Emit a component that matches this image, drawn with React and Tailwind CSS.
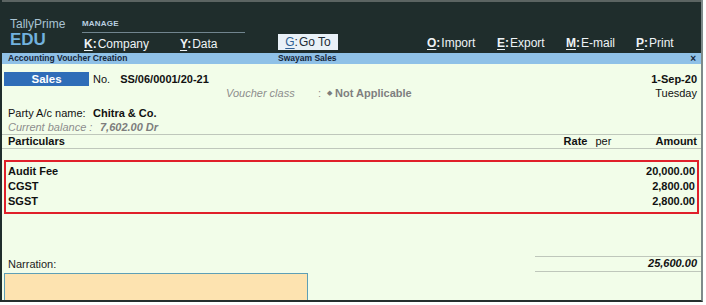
import React from "react";

const font = { fontFamily: "'Liberation Sans', Arial, sans-serif" };

function Key({ k, label, w }) {
  return (
    <div className={`${w} text-[12px] leading-[14px] text-[#eef3f6] whitespace-nowrap`}>
      <span className="font-bold underline underline-offset-2 decoration-1">{k}</span>
      <span className="font-bold">:</span>
      <span className="ml-[1px]">{label}</span>
    </div>
  );
}

export default function App() {
  return (
    <div className="w-[706px] h-[305px] bg-white" style={font}>
      <div className="w-[703px] h-[302px] flex flex-col border-l-2 border-l-[#1f2d2c] border-r-2 border-r-[#7e8a8a] border-b-2 border-b-[#26302f]">
        {/* ── Top bar ── */}
        <div className="h-[53px] shrink-0 bg-[#1f2d2c] border-t-2 border-t-[#5b6462] flex">
          <div className="w-[80px] pl-[8px] pt-[15px]">
            <p className="text-[12px] leading-[14px] text-[#a9c3d3]">TallyPrime</p>
            <p className="text-[17px] leading-[17px] font-bold text-[#72b2de]">EDU</p>
          </div>
          <div className="w-[163px] pt-[17px] flex flex-col">
            <p className="text-[8px] leading-[10px] font-bold text-[#b9d0e0] tracking-[0.2px]">MANAGE</p>
            <div className="h-px bg-[#71858f] mt-[3px]" />
            <div className="flex mt-[4px] pl-[2px]">
              <Key k="K" label="Company" w="w-[96px]" />
              <Key k="Y" label="Data" w="w-[60px]" />
            </div>
          </div>
          <div className="ml-[33px] mt-[32px] w-[60px] h-[16px] bg-[#e9f1f8] flex items-center justify-center text-[12px] text-[#1d2a35] whitespace-nowrap">
            <span className="underline underline-offset-2 decoration-1 text-[#2f5f93]">G</span>
            <span>:</span>
            <span className="ml-[1px]">Go To</span>
          </div>
          <div className="ml-[89px] pt-[34px] flex">
            <Key k="O" label="Import" w="w-[70px]" />
            <Key k="E" label="Export" w="w-[69px]" />
            <Key k="M" label="E-mail" w="w-[70px]" />
            <Key k="P" label="Print" w="w-[60px]" />
          </div>
        </div>

        {/* ── Title bar ── */}
        <div className="h-[11px] shrink-0 bg-[#8fc1e7] flex items-center text-[8.5px] leading-[11px] font-bold text-[#14263a]">
          <span className="pl-[6px] w-[276px]">Accounting Voucher Creation</span>
          <span className="flex-1">Swayam Sales</span>
          <span className="pr-[5px] text-[10px]">×</span>
        </div>

        {/* ── Body ── */}
        <div className="flex-1 bg-[#f2fde9] flex flex-col text-[11px] text-[#111]">
          <div className="pt-[8px] pr-[4px] flex items-center h-[22px]">
            <div className="ml-[2px] w-[85px] h-[14px] bg-[#2f6db8] text-white font-bold text-[11.5px] leading-[14px] text-center">
              Sales
            </div>
            <span className="ml-[4px]">No.</span>
            <span className="ml-[10px] font-bold">SS/06/0001/20-21</span>
            <span className="ml-auto font-bold">1-Sep-20</span>
          </div>
          <div className="h-[14px] leading-[14px] flex items-center pr-[4px]">
            <span className="ml-[224px] w-[92px] italic text-[#8d8d8d]">Voucher class</span>
            <span className="text-[#8d8d8d]">:</span>
            <span className="ml-[6px] text-[7px] leading-[7px] text-[#7d7d7d] -mt-[2px]">◆</span>
            <span className="ml-[3px] font-bold text-[#7f7f7f]">Not Applicable</span>
            <span className="ml-auto">Tuesday</span>
          </div>
          <div className="h-[14px] leading-[14px] flex mt-[6px] pl-[6px]">
            <span className="w-[85px]">Party A/c name:</span>
            <span className="font-bold">Chitra &amp; Co.</span>
          </div>
          <div className="h-[14px] leading-[14px] flex pl-[6px] text-[#8d8d8d]">
            <span className="w-[92px] italic">Current balance :</span>
            <span className="font-bold italic text-[#7d7d7d]">7,602.00 Dr</span>
          </div>
          <div className="h-[15px] border-t border-b border-[#bfc7bb] flex items-center pl-[6px] pr-[4px] font-bold">
            <span>Particulars</span>
            <span className="ml-auto">Rate</span>
            <span className="ml-[8px] w-[60px] font-normal">per</span>
            <span>Amount</span>
          </div>

          <div className="mt-[11px] mx-[2px] border-2 border-[#e0202a] pt-[2px] pb-[3px] pl-[2px] pr-[2px] font-bold">
            {[
              ["Audit Fee", "20,000.00"],
              ["CGST", "2,800.00"],
              ["SGST", "2,800.00"],
            ].map(([name, amt]) => (
              <div key={name} className="h-[15px] leading-[15px] flex justify-between">
                <span>{name}</span>
                <span>{amt}</span>
              </div>
            ))}
          </div>

          <div className="mt-auto flex h-[17px] items-center">
            <span className="pl-[6px] pt-[2px] text-[#222]">Narration:</span>
            <div className="ml-auto w-[166px] h-[16px] border-t border-b border-[#bfc7bb] flex items-center justify-end pr-[4px] font-bold italic">
              25,600.00
            </div>
          </div>
          <div className="ml-[2px] mt-[1px] w-[304px] h-[27px] bg-[#fde3b0] border border-[#5e9fb6] border-b-0" />
        </div>
      </div>
    </div>
  );
}
